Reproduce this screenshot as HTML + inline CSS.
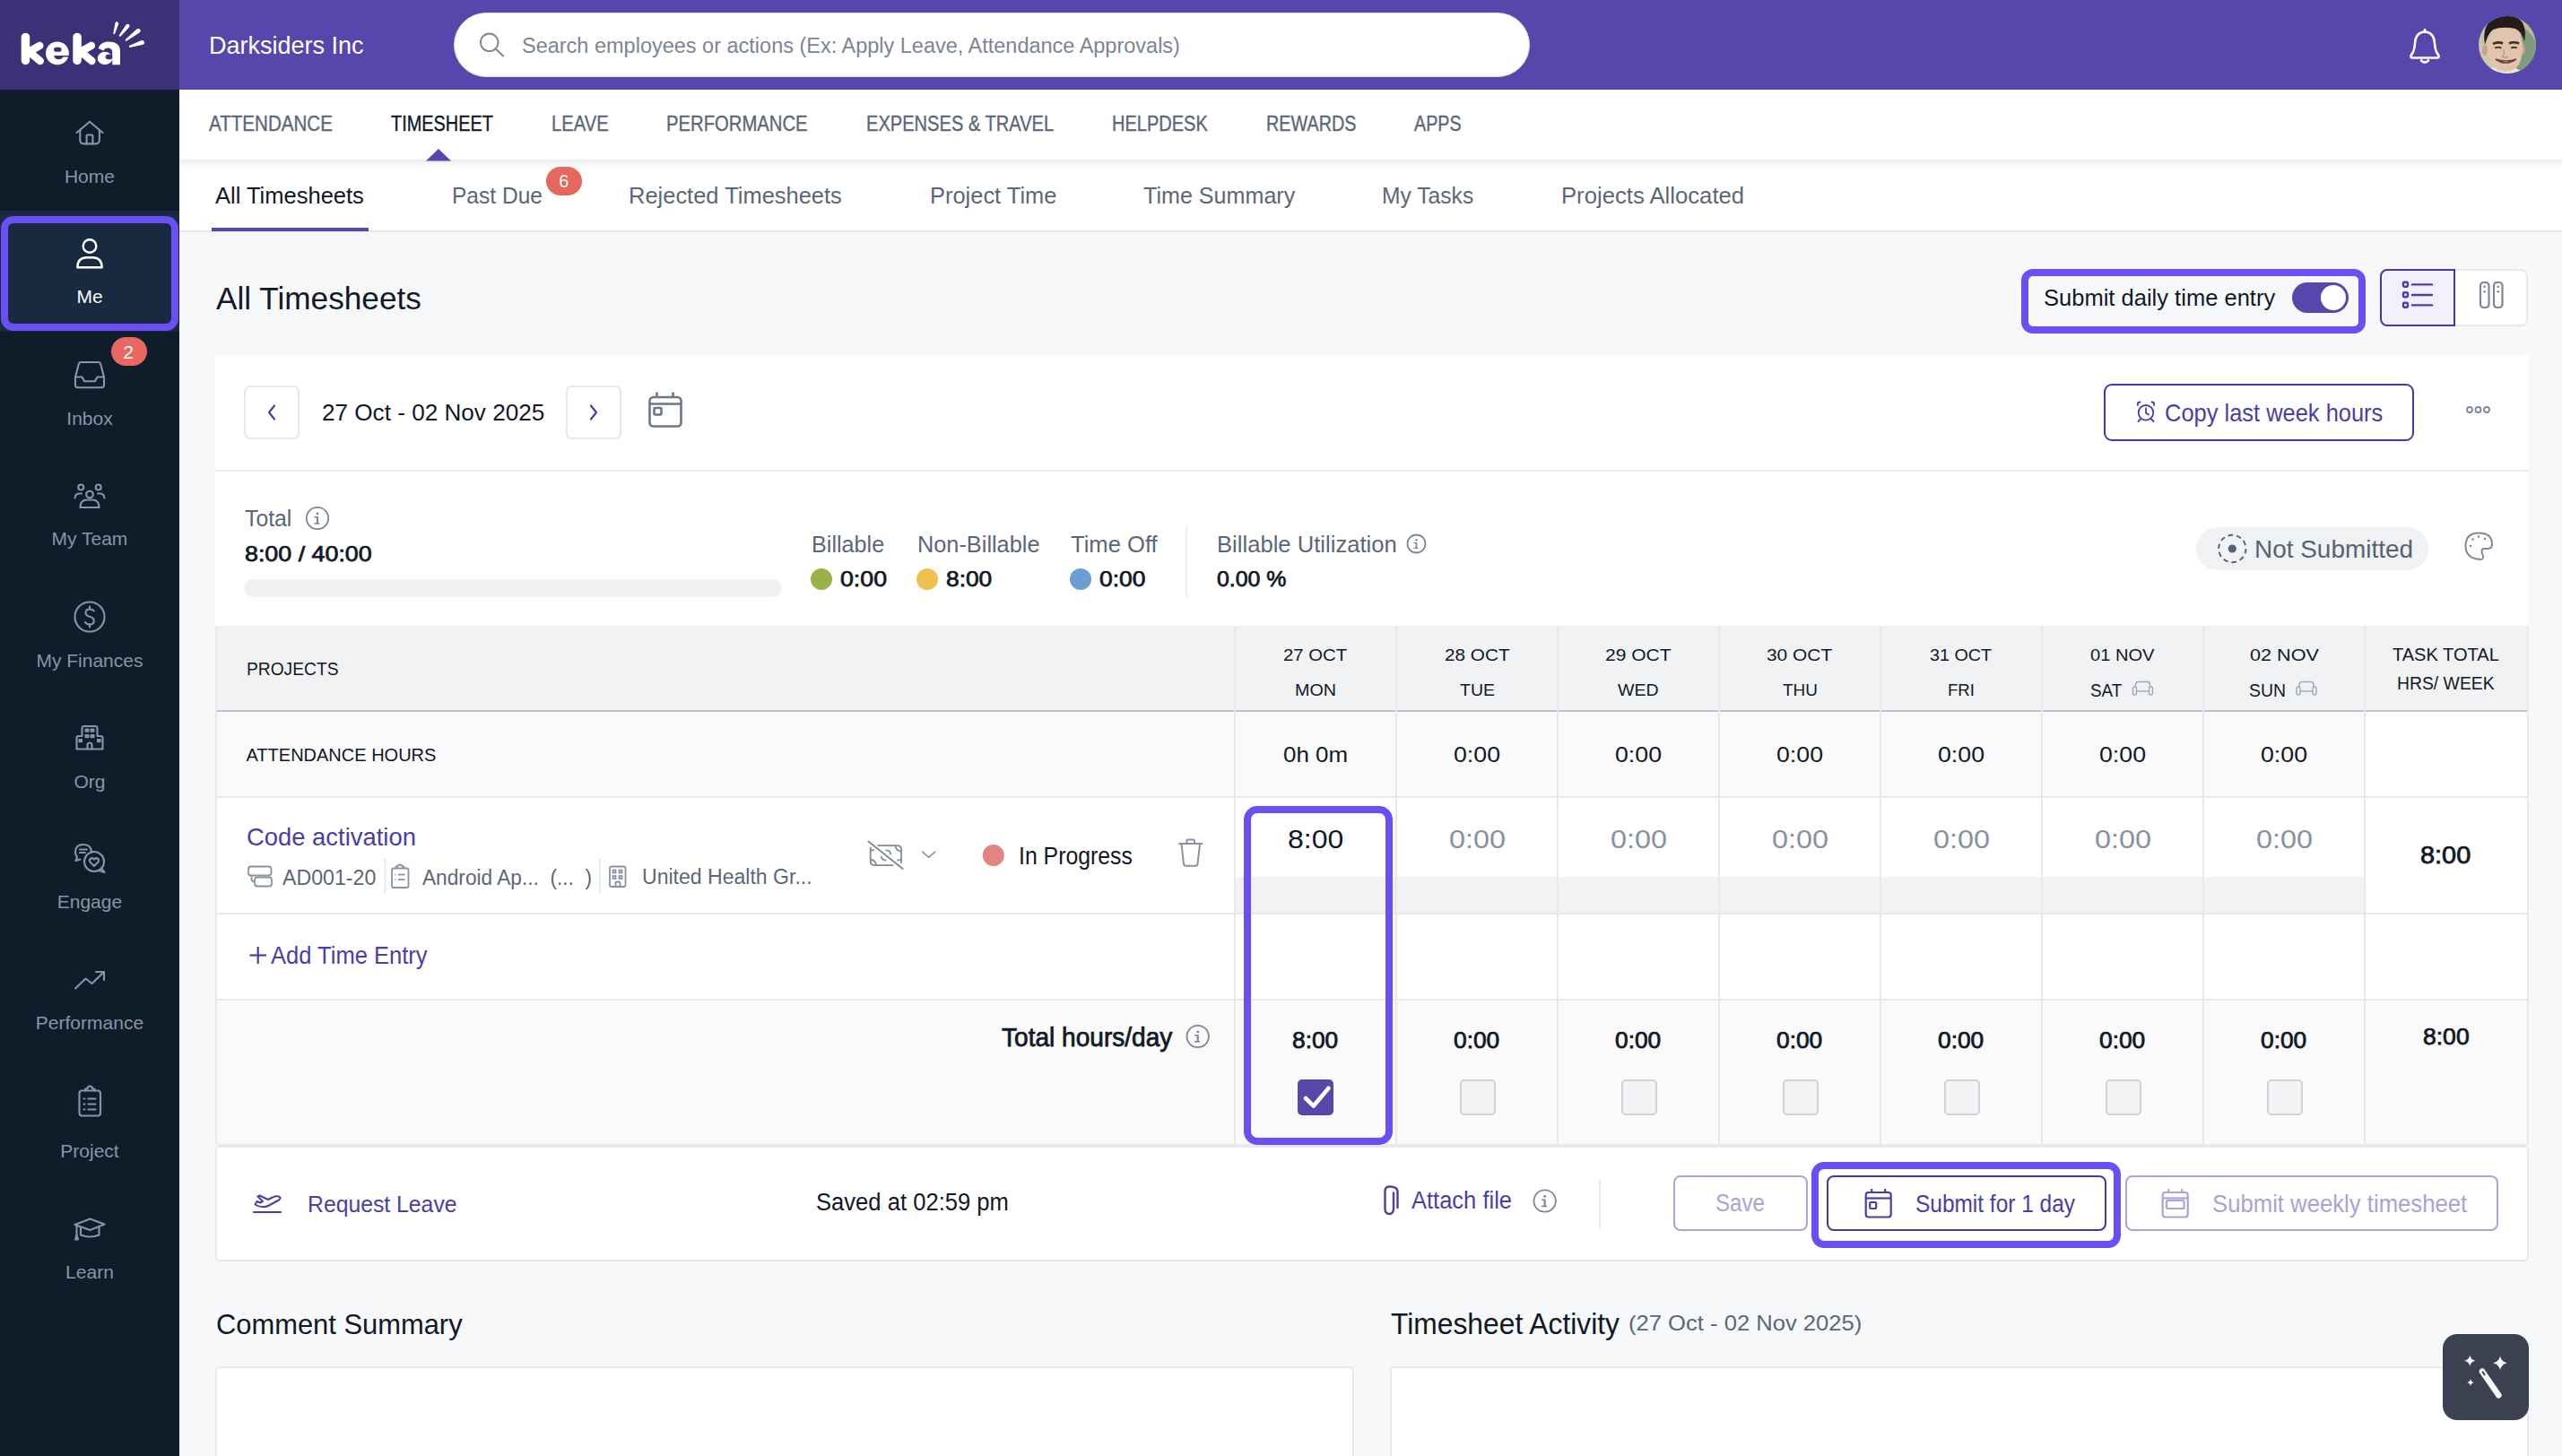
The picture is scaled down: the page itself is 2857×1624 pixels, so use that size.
<!DOCTYPE html>
<html><head><meta charset="utf-8"><title>Keka Timesheet</title>
<style>
html,body{margin:0;padding:0;width:2857px;height:1624px;overflow:hidden;background:#f7f8fa}
body{position:relative;font-family:"Liberation Sans",sans-serif}
.t{position:absolute;white-space:nowrap}
</style></head><body>
<div style="position:absolute;left:0px;top:0px;width:2857px;height:1624px;background:#f7f8fa"></div>
<div style="position:absolute;left:0px;top:0px;width:200px;height:1624px;background:#0f1d2a"></div>
<div style="position:absolute;left:0px;top:0px;width:200px;height:100px;background:#3c3176"></div>
<div style="position:absolute;left:0px;top:235px;width:200px;height:135px;background:#182a40"></div>
<div style="position:absolute;left:1px;top:241px;width:197.5px;height:128px;border:8px solid #6a4ff5;border-radius:14px;box-sizing:border-box"></div>
<div style="position:absolute;left:200px;top:0px;width:2657px;height:100px;background:#5547ab"></div>
<div style="position:absolute;left:200px;top:100px;width:2657px;height:78px;background:#fff"></div>
<div style="position:absolute;left:200px;top:178px;width:2657px;height:79px;background:linear-gradient(#e8e9ec 0px,#f1f2f3 3px,#fafafa 7px,#fff 11px)"></div>
<div style="position:absolute;left:200px;top:257px;width:2657px;height:2px;background:#e6e8ec"></div>
<div style="position:absolute;left:236px;top:254px;width:175px;height:4px;background:#5547ab"></div>
<div style="position:absolute;left:506px;top:14px;width:1200px;height:72px;background:#fff;border-radius:36px;border:1.5px solid #dcdee3;box-sizing:border-box"></div>
<div style="position:absolute;left:2254px;top:300px;width:384px;height:72px;border:8px solid #6a4ff5;border-radius:13px;box-sizing:border-box"></div>
<div style="position:absolute;left:2556px;top:315px;width:63px;height:34px;background:#5547ab;border-radius:17px"></div>
<div style="position:absolute;left:2588px;top:318px;width:28px;height:28px;background:#fff;border-radius:14px"></div>
<div style="position:absolute;left:2737px;top:300px;width:82px;height:64px;background:#fff;border:2px solid #e6e8ec;border-left:none;border-radius:0 8px 8px 0;box-sizing:border-box"></div>
<div style="position:absolute;left:2654px;top:300px;width:84px;height:64px;background:#f2f0fd;border:2.5px solid #4638a4;border-radius:8px 0 0 8px;box-sizing:border-box"></div>
<div style="position:absolute;left:240px;top:396px;width:2580px;height:302px;background:#fff"></div>
<div style="position:absolute;left:240px;top:524px;width:2580px;height:2px;background:#e9ebef"></div>
<div style="position:absolute;left:272px;top:430px;width:62px;height:60px;border:2px solid #e6e8ec;border-radius:7px;box-sizing:border-box;background:#fff"></div>
<div style="position:absolute;left:631px;top:430px;width:62px;height:60px;border:2px solid #e6e8ec;border-radius:7px;box-sizing:border-box;background:#fff"></div>
<div style="position:absolute;left:2346px;top:428px;width:346px;height:64px;border:2.5px solid #4638a4;border-radius:9px;box-sizing:border-box"></div>
<div style="position:absolute;left:272px;top:646px;width:600px;height:20px;background:#f0f1f4;border-radius:10px"></div>
<div style="position:absolute;left:1322px;top:586px;width:2px;height:80px;background:#eceef1"></div>
<div style="position:absolute;left:904px;top:634px;width:24px;height:24px;background:#9ab24a;border-radius:50%"></div>
<div style="position:absolute;left:1022px;top:634px;width:24px;height:24px;background:#f0c04e;border-radius:50%"></div>
<div style="position:absolute;left:1193px;top:634px;width:24px;height:24px;background:#6a9fd3;border-radius:50%"></div>
<div style="position:absolute;left:2449px;top:588px;width:259px;height:48px;background:#f1f2f4;border-radius:24px"></div>
<div style="position:absolute;left:240px;top:698px;width:2580px;height:94px;background:#f1f2f4"></div>
<div style="position:absolute;left:240px;top:793px;width:2580px;height:96px;background:#fafafa"></div>
<div style="position:absolute;left:2638px;top:793px;width:181px;height:96px;background:#fff"></div>
<div style="position:absolute;left:240px;top:792px;width:2580px;height:2px;background:#bcc3cd"></div>
<div style="position:absolute;left:240px;top:889px;width:2580px;height:227px;background:#fff"></div>
<div style="position:absolute;left:240px;top:888px;width:2580px;height:2px;background:#e8eaee"></div>
<div style="position:absolute;left:1377px;top:978px;width:1260px;height:41px;background:#f1f2f4"></div>
<div style="position:absolute;left:240px;top:1018px;width:2580px;height:2px;background:#e8eaee"></div>
<div style="position:absolute;left:240px;top:1114px;width:2580px;height:2px;background:#e8eaee"></div>
<div style="position:absolute;left:240px;top:1116px;width:2580px;height:161px;background:#fafafa"></div>
<div style="position:absolute;left:1376px;top:698px;width:2px;height:579px;background:#e6e8ec"></div>
<div style="position:absolute;left:1556px;top:698px;width:2px;height:579px;background:#e6e8ec"></div>
<div style="position:absolute;left:1736px;top:698px;width:2px;height:579px;background:#e6e8ec"></div>
<div style="position:absolute;left:1916px;top:698px;width:2px;height:579px;background:#e6e8ec"></div>
<div style="position:absolute;left:2096px;top:698px;width:2px;height:579px;background:#e6e8ec"></div>
<div style="position:absolute;left:2276px;top:698px;width:2px;height:579px;background:#e6e8ec"></div>
<div style="position:absolute;left:2456px;top:698px;width:2px;height:579px;background:#e6e8ec"></div>
<div style="position:absolute;left:2636px;top:698px;width:2px;height:579px;background:#e6e8ec"></div>
<div style="position:absolute;left:240px;top:698px;width:2580px;height:580px;border:2px solid #e8e9ec;border-top:none;border-radius:0 0 5px 5px;box-sizing:border-box"></div>
<div style="position:absolute;left:1447px;top:1204px;width:40px;height:40px;background:#5548a8;border-radius:5px"></div>
<div style="position:absolute;left:1628px;top:1204px;width:40px;height:40px;background:#f3f4f6;border:2px solid #cfd4db;border-radius:5px;box-sizing:border-box"></div>
<div style="position:absolute;left:1808px;top:1204px;width:40px;height:40px;background:#f3f4f6;border:2px solid #cfd4db;border-radius:5px;box-sizing:border-box"></div>
<div style="position:absolute;left:1988px;top:1204px;width:40px;height:40px;background:#f3f4f6;border:2px solid #cfd4db;border-radius:5px;box-sizing:border-box"></div>
<div style="position:absolute;left:2168px;top:1204px;width:40px;height:40px;background:#f3f4f6;border:2px solid #cfd4db;border-radius:5px;box-sizing:border-box"></div>
<div style="position:absolute;left:2348px;top:1204px;width:40px;height:40px;background:#f3f4f6;border:2px solid #cfd4db;border-radius:5px;box-sizing:border-box"></div>
<div style="position:absolute;left:2528px;top:1204px;width:40px;height:40px;background:#f3f4f6;border:2px solid #cfd4db;border-radius:5px;box-sizing:border-box"></div>
<div style="position:absolute;left:1387px;top:899px;width:166px;height:378px;border:8px solid #6a4ff5;border-radius:15px;box-sizing:border-box"></div>
<div style="position:absolute;left:240px;top:1278px;width:2580px;height:129px;background:#fff;border:2px solid #e8e9ec;border-radius:5px;box-sizing:border-box"></div>
<div style="position:absolute;left:1783px;top:1315px;width:2px;height:55px;background:#e6e8ec"></div>
<div style="position:absolute;left:1866px;top:1311px;width:150px;height:62px;border:2px solid #aaa4d8;border-radius:8px;box-sizing:border-box"></div>
<div style="position:absolute;left:2037px;top:1311px;width:312px;height:62px;border:2.5px solid #4638a4;border-radius:8px;box-sizing:border-box"></div>
<div style="position:absolute;left:2370px;top:1311px;width:416px;height:62px;border:2px solid #aaa4d8;border-radius:8px;box-sizing:border-box"></div>
<div style="position:absolute;left:2020px;top:1296px;width:345px;height:96px;border:8px solid #6a4ff5;border-radius:14px;box-sizing:border-box"></div>
<div style="position:absolute;left:240px;top:1524px;width:1270px;height:200px;background:#fff;border:2px solid #e8e9ec;border-radius:5px;box-sizing:border-box"></div>
<div style="position:absolute;left:1550px;top:1524px;width:1270px;height:200px;background:#fff;border:2px solid #e8e9ec;border-radius:5px;box-sizing:border-box"></div>
<div style="position:absolute;left:2724px;top:1488px;width:96px;height:96px;background:#3c4151;border-radius:16px"></div>
<div style="position:absolute;left:609px;top:186px;width:40px;height:32px;background:#e5675e;border-radius:16px"></div>
<div style="position:absolute;left:124px;top:376px;width:40px;height:32px;background:#e8675f;border-radius:16px"></div>
<div class="t" style="left:71.95px;top:185.52px;font-size:21.01px;line-height:21.01px;color:#8a94a6;">Home</div>
<div class="t" style="left:85.40px;top:320.22px;font-size:21.01px;line-height:21.01px;color:#fff;">Me</div>
<div class="t" style="left:74.32px;top:455.62px;font-size:21.01px;line-height:21.01px;color:#8a94a6;">Inbox</div>
<div class="t" style="left:57.56px;top:590.32px;font-size:21.01px;line-height:21.01px;color:#8a94a6;">My Team</div>
<div class="t" style="left:40.44px;top:725.52px;font-size:21.01px;line-height:21.01px;color:#8a94a6;">My Finances</div>
<div class="t" style="left:82.51px;top:860.72px;font-size:21.01px;line-height:21.01px;color:#8a94a6;">Org</div>
<div class="t" style="left:63.76px;top:995.42px;font-size:21.01px;line-height:21.01px;color:#8a94a6;">Engage</div>
<div class="t" style="left:39.86px;top:1130.32px;font-size:21.01px;line-height:21.01px;color:#8a94a6;">Performance</div>
<div class="t" style="left:67.33px;top:1273.22px;font-size:21.01px;line-height:21.01px;color:#8a94a6;">Project</div>
<div class="t" style="left:73.11px;top:1408.42px;font-size:21.01px;line-height:21.01px;color:#8a94a6;">Learn</div>
<div class="t" style="left:137.24px;top:382.21px;font-size:21.13px;line-height:21.13px;color:#fff;">2</div>
<div class="t" style="left:233.00px;top:36.60px;font-size:28.12px;line-height:28.12px;color:#fff;transform:scaleX(0.9600);transform-origin:0 0;">Darksiders Inc</div>
<div class="t" style="left:581.60px;top:39.16px;font-size:23.91px;line-height:23.91px;color:#7b8597;transform:scaleX(0.9827);transform-origin:0 0;">Search employees or actions (Ex: Apply Leave, Attendance Approvals)</div>
<div class="t" style="left:232.80px;top:126.70px;font-size:23.04px;line-height:23.04px;color:#5b6778;transform:scaleX(0.8933);transform-origin:0 0;-webkit-text-stroke:0.35px currentColor;">ATTENDANCE</div>
<div class="t" style="left:435.70px;top:126.70px;font-size:23.04px;line-height:23.04px;color:#111827;transform:scaleX(0.8643);transform-origin:0 0;-webkit-text-stroke:0.35px currentColor;">TIMESHEET</div>
<div class="t" style="left:614.70px;top:126.70px;font-size:23.04px;line-height:23.04px;color:#5b6778;transform:scaleX(0.8777);transform-origin:0 0;-webkit-text-stroke:0.35px currentColor;">LEAVE</div>
<div class="t" style="left:743.30px;top:126.70px;font-size:23.04px;line-height:23.04px;color:#5b6778;transform:scaleX(0.8798);transform-origin:0 0;-webkit-text-stroke:0.35px currentColor;">PERFORMANCE</div>
<div class="t" style="left:965.60px;top:126.70px;font-size:23.04px;line-height:23.04px;color:#5b6778;transform:scaleX(0.8722);transform-origin:0 0;-webkit-text-stroke:0.35px currentColor;">EXPENSES &amp; TRAVEL</div>
<div class="t" style="left:1239.70px;top:126.70px;font-size:23.04px;line-height:23.04px;color:#5b6778;transform:scaleX(0.8689);transform-origin:0 0;-webkit-text-stroke:0.35px currentColor;">HELPDESK</div>
<div class="t" style="left:1411.50px;top:126.70px;font-size:23.04px;line-height:23.04px;color:#5b6778;transform:scaleX(0.8595);transform-origin:0 0;-webkit-text-stroke:0.35px currentColor;">REWARDS</div>
<div class="t" style="left:1577.00px;top:126.70px;font-size:23.04px;line-height:23.04px;color:#5b6778;transform:scaleX(0.8567);transform-origin:0 0;-webkit-text-stroke:0.35px currentColor;">APPS</div>
<div class="t" style="left:240.00px;top:205.31px;font-size:26.09px;line-height:26.09px;color:#111827;transform:scaleX(0.9781);transform-origin:0 0;">All Timesheets</div>
<div class="t" style="left:503.50px;top:205.31px;font-size:26.09px;line-height:26.09px;color:#5b6778;transform:scaleX(0.9408);transform-origin:0 0;">Past Due</div>
<div class="t" style="left:701.00px;top:205.31px;font-size:26.09px;line-height:26.09px;color:#5b6778;transform:scaleX(0.9767);transform-origin:0 0;">Rejected Timesheets</div>
<div class="t" style="left:1036.50px;top:205.31px;font-size:26.09px;line-height:26.09px;color:#5b6778;transform:scaleX(0.9756);transform-origin:0 0;">Project Time</div>
<div class="t" style="left:1274.70px;top:205.31px;font-size:26.09px;line-height:26.09px;color:#5b6778;transform:scaleX(0.9628);transform-origin:0 0;">Time Summary</div>
<div class="t" style="left:1540.70px;top:205.31px;font-size:26.09px;line-height:26.09px;color:#5b6778;transform:scaleX(0.9448);transform-origin:0 0;">My Tasks</div>
<div class="t" style="left:1740.60px;top:205.31px;font-size:26.09px;line-height:26.09px;color:#5b6778;transform:scaleX(0.9845);transform-origin:0 0;">Projects Allocated</div>
<div class="t" style="left:623.33px;top:192.61px;font-size:19.72px;line-height:19.72px;color:#fff;">6</div>
<div class="t" style="left:240.50px;top:315.56px;font-size:34.78px;line-height:34.78px;color:#111827;transform:scaleX(1.0122);transform-origin:0 0;">All Timesheets</div>
<div class="t" style="left:2279.40px;top:318.91px;font-size:26.09px;line-height:26.09px;color:#111827;transform:scaleX(0.9788);transform-origin:0 0;">Submit daily time entry</div>
<div class="t" style="left:358.50px;top:447.25px;font-size:26.52px;line-height:26.52px;color:#111827;transform:scaleX(0.9850);transform-origin:0 0;">27 Oct - 02 Nov 2025</div>
<div class="t" style="left:2413.70px;top:446.93px;font-size:27.25px;line-height:27.25px;color:#4a3ea8;transform:scaleX(0.9339);transform-origin:0 0;">Copy last week hours</div>
<div class="t" style="left:273.00px;top:564.91px;font-size:26.09px;line-height:26.09px;color:#5b6778;transform:scaleX(0.9500);transform-origin:0 0;">Total</div>
<div class="t" style="left:273.40px;top:606.13px;font-size:24.65px;line-height:24.65px;color:#111827;-webkit-text-stroke:0.75px currentColor;transform:scaleX(1.0887);transform-origin:0 0;">8:00 / 40:00</div>
<div class="t" style="left:904.60px;top:593.51px;font-size:26.09px;line-height:26.09px;color:#5b6778;transform:scaleX(0.9651);transform-origin:0 0;">Billable</div>
<div class="t" style="left:1023.30px;top:593.51px;font-size:26.09px;line-height:26.09px;color:#5b6778;transform:scaleX(0.9707);transform-origin:0 0;">Non-Billable</div>
<div class="t" style="left:1193.50px;top:593.51px;font-size:26.09px;line-height:26.09px;color:#5b6778;transform:scaleX(0.9815);transform-origin:0 0;">Time Off</div>
<div class="t" style="left:1356.50px;top:593.51px;font-size:26.09px;line-height:26.09px;color:#5b6778;transform:scaleX(0.9823);transform-origin:0 0;">Billable Utilization</div>
<div class="t" style="left:937.20px;top:633.73px;font-size:24.65px;line-height:24.65px;color:#111827;-webkit-text-stroke:0.75px currentColor;transform:scaleX(1.0845);transform-origin:0 0;">0:00</div>
<div class="t" style="left:1055.40px;top:633.73px;font-size:24.65px;line-height:24.65px;color:#111827;-webkit-text-stroke:0.75px currentColor;transform:scaleX(1.0681);transform-origin:0 0;">8:00</div>
<div class="t" style="left:1226.00px;top:633.73px;font-size:24.65px;line-height:24.65px;color:#111827;-webkit-text-stroke:0.75px currentColor;transform:scaleX(1.0722);transform-origin:0 0;">0:00</div>
<div class="t" style="left:1356.87px;top:633.73px;font-size:24.65px;line-height:24.65px;color:#111827;-webkit-text-stroke:0.75px currentColor;transform:scaleX(1.0100);transform-origin:0 0;">0.00 %</div>
<div class="t" style="left:2514.00px;top:598.69px;font-size:27.54px;line-height:27.54px;color:#566275;transform:scaleX(1.0145);transform-origin:0 0;">Not Submitted</div>
<div class="t" style="left:274.50px;top:736.52px;font-size:19.71px;line-height:19.71px;color:#111827;transform:scaleX(0.9748);transform-origin:0 0;">PROJECTS</div>
<div class="t" style="left:1431.40px;top:720.68px;font-size:19.28px;line-height:19.28px;color:#111827;transform:scaleX(1.0551);transform-origin:0 0;">27 OCT</div>
<div class="t" style="left:1443.90px;top:760.38px;font-size:19.28px;line-height:19.28px;color:#111827;transform:scaleX(1.0262);transform-origin:0 0;">MON</div>
<div class="t" style="left:1610.70px;top:720.68px;font-size:19.28px;line-height:19.28px;color:#111827;transform:scaleX(1.0759);transform-origin:0 0;">28 OCT</div>
<div class="t" style="left:1627.50px;top:760.38px;font-size:19.28px;line-height:19.28px;color:#111827;transform:scaleX(1.0114);transform-origin:0 0;">TUE</div>
<div class="t" style="left:1790.15px;top:720.68px;font-size:19.28px;line-height:19.28px;color:#111827;transform:scaleX(1.0922);transform-origin:0 0;">29 OCT</div>
<div class="t" style="left:1804.10px;top:760.38px;font-size:19.28px;line-height:19.28px;color:#111827;transform:scaleX(1.0174);transform-origin:0 0;">WED</div>
<div class="t" style="left:1970.40px;top:720.68px;font-size:19.28px;line-height:19.28px;color:#111827;transform:scaleX(1.0848);transform-origin:0 0;">30 OCT</div>
<div class="t" style="left:1987.50px;top:760.38px;font-size:19.28px;line-height:19.28px;color:#111827;transform:scaleX(0.9843);transform-origin:0 0;">THU</div>
<div class="t" style="left:2152.40px;top:720.68px;font-size:19.28px;line-height:19.28px;color:#111827;transform:scaleX(1.0255);transform-origin:0 0;">31 OCT</div>
<div class="t" style="left:2172.00px;top:760.38px;font-size:19.28px;line-height:19.28px;color:#111827;transform:scaleX(0.9665);transform-origin:0 0;">FRI</div>
<div class="t" style="left:2331.25px;top:720.68px;font-size:19.28px;line-height:19.28px;color:#111827;transform:scaleX(1.0432);transform-origin:0 0;">01 NOV</div>
<div class="t" style="left:2330.60px;top:760.02px;font-size:20.29px;line-height:20.29px;color:#111827;transform:scaleX(0.9330);transform-origin:0 0;">SAT</div>
<div class="t" style="left:2508.50px;top:720.68px;font-size:19.28px;line-height:19.28px;color:#111827;transform:scaleX(1.1234);transform-origin:0 0;">02 NOV</div>
<div class="t" style="left:2508.00px;top:760.02px;font-size:20.29px;line-height:20.29px;color:#111827;transform:scaleX(0.9577);transform-origin:0 0;">SUN</div>
<div class="t" style="left:2667.80px;top:720.62px;font-size:19.71px;line-height:19.71px;color:#111827;transform:scaleX(1.0173);transform-origin:0 0;">TASK TOTAL</div>
<div class="t" style="left:2673.00px;top:752.62px;font-size:19.71px;line-height:19.71px;color:#111827;transform:scaleX(0.9822);transform-origin:0 0;">HRS/ WEEK</div>
<div class="t" style="left:274.50px;top:831.57px;font-size:20.0px;line-height:20.0px;color:#111827;">ATTENDANCE HOURS</div>
<div class="t" style="left:1430.90px;top:829.67px;font-size:24.37px;line-height:24.37px;color:#111827;transform:scaleX(1.0657);transform-origin:0 0;">0h 0m</div>
<div class="t" style="left:1435.85px;top:920.76px;font-size:29.58px;line-height:29.58px;color:#111827;transform:scaleX(1.0829);transform-origin:0 0;">8:00</div>
<div class="t" style="left:1441.39px;top:1148.28px;font-size:25.07px;line-height:25.07px;color:#111827;-webkit-text-stroke:0.75px currentColor;transform:scaleX(1.0505);transform-origin:0 0;">8:00</div>
<div class="t" style="left:1621.00px;top:829.67px;font-size:24.37px;line-height:24.37px;color:#111827;transform:scaleX(1.0971);transform-origin:0 0;">0:00</div>
<div class="t" style="left:1615.50px;top:920.76px;font-size:29.58px;line-height:29.58px;color:#8891a0;transform:scaleX(1.0950);transform-origin:0 0;">0:00</div>
<div class="t" style="left:1621.39px;top:1148.28px;font-size:25.07px;line-height:25.07px;color:#111827;-webkit-text-stroke:0.75px currentColor;transform:scaleX(1.0505);transform-origin:0 0;">0:00</div>
<div class="t" style="left:1801.00px;top:829.67px;font-size:24.37px;line-height:24.37px;color:#111827;transform:scaleX(1.0971);transform-origin:0 0;">0:00</div>
<div class="t" style="left:1795.50px;top:920.76px;font-size:29.58px;line-height:29.58px;color:#8891a0;transform:scaleX(1.0950);transform-origin:0 0;">0:00</div>
<div class="t" style="left:1801.39px;top:1148.28px;font-size:25.07px;line-height:25.07px;color:#111827;-webkit-text-stroke:0.75px currentColor;transform:scaleX(1.0505);transform-origin:0 0;">0:00</div>
<div class="t" style="left:1981.00px;top:829.67px;font-size:24.37px;line-height:24.37px;color:#111827;transform:scaleX(1.0971);transform-origin:0 0;">0:00</div>
<div class="t" style="left:1975.50px;top:920.76px;font-size:29.58px;line-height:29.58px;color:#8891a0;transform:scaleX(1.0950);transform-origin:0 0;">0:00</div>
<div class="t" style="left:1981.39px;top:1148.28px;font-size:25.07px;line-height:25.07px;color:#111827;-webkit-text-stroke:0.75px currentColor;transform:scaleX(1.0505);transform-origin:0 0;">0:00</div>
<div class="t" style="left:2161.00px;top:829.67px;font-size:24.37px;line-height:24.37px;color:#111827;transform:scaleX(1.0971);transform-origin:0 0;">0:00</div>
<div class="t" style="left:2155.50px;top:920.76px;font-size:29.58px;line-height:29.58px;color:#8891a0;transform:scaleX(1.0950);transform-origin:0 0;">0:00</div>
<div class="t" style="left:2161.39px;top:1148.28px;font-size:25.07px;line-height:25.07px;color:#111827;-webkit-text-stroke:0.75px currentColor;transform:scaleX(1.0505);transform-origin:0 0;">0:00</div>
<div class="t" style="left:2341.00px;top:829.67px;font-size:24.37px;line-height:24.37px;color:#111827;transform:scaleX(1.0971);transform-origin:0 0;">0:00</div>
<div class="t" style="left:2335.50px;top:920.76px;font-size:29.58px;line-height:29.58px;color:#8891a0;transform:scaleX(1.0950);transform-origin:0 0;">0:00</div>
<div class="t" style="left:2341.39px;top:1148.28px;font-size:25.07px;line-height:25.07px;color:#111827;-webkit-text-stroke:0.75px currentColor;transform:scaleX(1.0505);transform-origin:0 0;">0:00</div>
<div class="t" style="left:2521.00px;top:829.67px;font-size:24.37px;line-height:24.37px;color:#111827;transform:scaleX(1.0971);transform-origin:0 0;">0:00</div>
<div class="t" style="left:2515.50px;top:920.76px;font-size:29.58px;line-height:29.58px;color:#8891a0;transform:scaleX(1.0950);transform-origin:0 0;">0:00</div>
<div class="t" style="left:2521.39px;top:1148.28px;font-size:25.07px;line-height:25.07px;color:#111827;-webkit-text-stroke:0.75px currentColor;transform:scaleX(1.0505);transform-origin:0 0;">0:00</div>
<div class="t" style="left:2699.40px;top:941.35px;font-size:26.76px;line-height:26.76px;color:#111827;-webkit-text-stroke:0.75px currentColor;transform:scaleX(1.0798);transform-origin:0 0;">8:00</div>
<div class="t" style="left:2702.19px;top:1143.90px;font-size:24.93px;line-height:24.93px;color:#111827;-webkit-text-stroke:0.75px currentColor;transform:scaleX(1.0644);transform-origin:0 0;">8:00</div>
<div class="t" style="left:275.00px;top:920.78px;font-size:26.96px;line-height:26.96px;color:#4a3ea8;transform:scaleX(1.0167);transform-origin:0 0;">Code activation</div>
<div class="t" style="left:314.80px;top:967.28px;font-size:23.77px;line-height:23.77px;color:#5b6778;transform:scaleX(0.9749);transform-origin:0 0;">AD001-20</div>
<div class="t" style="left:470.70px;top:967.28px;font-size:23.77px;line-height:23.77px;color:#5b6778;transform:scaleX(0.9540);transform-origin:0 0;white-space:pre">Android Ap...  (...  )</div>
<div class="t" style="left:715.50px;top:967.21px;font-size:23.62px;line-height:23.62px;color:#5b6778;transform:scaleX(0.9765);transform-origin:0 0;">United Health Gr...</div>
<div class="t" style="left:1136.00px;top:941.06px;font-size:27.1px;line-height:27.1px;color:#111827;transform:scaleX(0.9162);transform-origin:0 0;">In Progress</div>
<div class="t" style="left:302.00px;top:1051.69px;font-size:27.54px;line-height:27.54px;color:#4a3ea8;transform:scaleX(0.9276);transform-origin:0 0;">Add Time Entry</div>
<div class="t" style="left:1117.16px;top:1142.66px;font-size:28.99px;line-height:28.99px;color:#111827;-webkit-text-stroke:0.75px currentColor;transform:scaleX(0.9681);transform-origin:0 0;">Total hours/day</div>
<div class="t" style="left:342.50px;top:1329.55px;font-size:26.52px;line-height:26.52px;color:#4a3ea8;transform:scaleX(0.9336);transform-origin:0 0;">Request Leave</div>
<div class="t" style="left:910.00px;top:1328.31px;font-size:26.81px;line-height:26.81px;color:#111827;transform:scaleX(0.9553);transform-origin:0 0;">Saved at 02:59 pm</div>
<div class="t" style="left:1574.00px;top:1326.31px;font-size:26.81px;line-height:26.81px;color:#4a3ea8;transform:scaleX(0.9516);transform-origin:0 0;">Attach file</div>
<div class="t" style="left:1913.00px;top:1329.31px;font-size:26.81px;line-height:26.81px;color:#a9a3d6;transform:scaleX(0.8998);transform-origin:0 0;">Save</div>
<div class="t" style="left:2135.80px;top:1328.69px;font-size:27.54px;line-height:27.54px;color:#4a3ea8;transform:scaleX(0.8878);transform-origin:0 0;">Submit for 1 day</div>
<div class="t" style="left:2467.00px;top:1328.69px;font-size:27.54px;line-height:27.54px;color:#a9a3d6;transform:scaleX(0.9334);transform-origin:0 0;">Submit weekly timesheet</div>
<div class="t" style="left:241.00px;top:1461.50px;font-size:31.3px;line-height:31.3px;color:#111827;transform:scaleX(0.9869);transform-origin:0 0;">Comment Summary</div>
<div class="t" style="left:1551.30px;top:1460.92px;font-size:32.46px;line-height:32.46px;color:#111827;transform:scaleX(0.9795);transform-origin:0 0;">Timesheet Activity</div>
<div class="t" style="left:1815.80px;top:1464.13px;font-size:24.65px;line-height:24.65px;color:#5b6778;transform:scaleX(1.0387);transform-origin:0 0;">(27 Oct - 02 Nov 2025)</div>
<svg style="position:absolute;left:0;top:0" width="2857" height="1624" viewBox="0 0 2857 1624">
<g fill="#fff" stroke="#fff" stroke-linecap="round">
<line x1="28.45" y1="41.4" x2="28.45" y2="67.5" stroke-width="9.5"/>
<line x1="31" y1="58.5" x2="44.3" y2="50.8" stroke-width="8.4"/>
<line x1="34" y1="59" x2="44.8" y2="68" stroke-width="8.4"/>
<line x1="86.05" y1="41.4" x2="86.05" y2="67.5" stroke-width="9.5"/>
<line x1="88.6" y1="58.5" x2="101.9" y2="50.8" stroke-width="8.4"/>
<line x1="91.6" y1="59" x2="102.4" y2="68" stroke-width="8.4"/>
</g>
<circle cx="63.9" cy="59.4" r="12.9" fill="#fff"/>
<rect x="60" y="52.8" width="8.6" height="5" rx="2.5" fill="#3c3176"/>
<path d="M60.2 62 H70.5 Q70 66.2 65.5 66.2 Q61 66.2 60.2 62Z" fill="#3c3176"/><rect x="69" y="62" width="9" height="1.5" fill="#3c3176"/>
<path d="M109.8 54 C111 48.5 116.5 46.5 121 46.5 C128.5 46.5 134 49.5 134 56.5 V72.2 H125.2 V58 C125.2 55.2 123.2 53.6 120.5 53.6 C118.2 53.6 116.6 54.6 115.4 56.4 Z" fill="#fff"/>
<ellipse cx="117" cy="65" rx="8.3" ry="7.2" fill="#fff"/>
<path d="M117.6 63.4 C117.6 61.2 119.6 60.4 121.8 60.4 C124 60.4 125.3 61.5 125.3 63.4 C125.3 65.3 124 66.3 121.8 66.3 C119.6 66.3 117.6 65.5 117.6 63.4Z" fill="#3c3176"/>
<g fill="#fff"><path d="M128.26 37.46 L132.13 26.70 A1.9 1.9 0 0 0 128.47 25.70 L126.34 36.94 A1.0 1.0 0 0 0 128.26 37.46Z"/><path d="M134.66 40.39 L144.12 30.27 A2.2 2.2 0 0 0 140.68 27.53 L132.94 39.01 A1.1 1.1 0 0 0 134.66 40.39Z"/><path d="M141.50 45.61 L155.80 36.24 A2.45 2.45 0 0 0 152.80 32.36 L140.10 43.79 A1.15 1.15 0 0 0 141.50 45.61Z"/><path d="M145.15 52.89 L159.23 49.69 A2.4 2.4 0 0 0 157.77 45.11 L144.45 50.71 A1.15 1.15 0 0 0 145.15 52.89Z"/></g>
<g fill="none" stroke="#8a94a6" stroke-width="2.1" stroke-linecap="round" stroke-linejoin="round">
<path d="M85.5 148 L100 135.8 L114.5 148"/><path d="M89.3 145.5 V156 Q89.3 160.4 93.7 160.4 H106.5 Q110.9 160.4 110.9 156 V145.5"/><path d="M96.6 160.4 V151.5 Q96.6 150.5 97.6 150.5 H102.4 Q103.4 150.5 103.4 151.5 V160.4"/>
</g>
<g fill="none" stroke="#fff" stroke-width="2.4" stroke-linecap="round" stroke-linejoin="round"><circle cx="100" cy="274.5" r="7.3"/><path d="M86.3 298.3 Q86.5 287.8 96 287.3 H104 Q113.5 287.8 113.7 298.3 Z"/></g>
<g fill="none" stroke="#8a94a6" stroke-width="2.1" stroke-linecap="round" stroke-linejoin="round">
<path d="M84 420.5 L88 405.5 Q88.5 404 90.5 404 H109.5 Q111.5 404 112 405.5 L116 420.5 V429.5 Q116 432.2 113.3 432.2 H86.7 Q84 432.2 84 429.5 Z"/><path d="M84 420.5 H91.5 L94 425.3 H106 L108.5 420.5 H116"/>
<circle cx="100" cy="551.5" r="3.8"/><circle cx="90.3" cy="543.5" r="3"/><circle cx="109.7" cy="543.5" r="3"/><path d="M89.5 566 Q89.5 557.5 97 557.5 H103 Q110.5 557.5 110.5 566 Z"/><path d="M83.5 555.5 Q84 550.5 89 550.5 H91"/><path d="M116.5 555.5 Q116 550.5 111 550.5 H109"/>
<circle cx="100" cy="688" r="16.5"/><path d="M104.8 681.5 Q103.5 679.5 100 679.5 Q95.5 679.5 95.5 683.5 Q95.5 686.5 100 687.8 Q104.8 689 104.8 692.5 Q104.8 696.5 100 696.5 Q96.3 696.5 95 694"/><line x1="100" y1="676.5" x2="100" y2="679.5"/><line x1="100" y1="696.5" x2="100" y2="699.5"/>
<path d="M85.5 835.5 V823 Q85.5 821 87.5 821 H91.5 V812 Q91.5 810 93.5 810 H106.5 Q108.5 810 108.5 812 V821 H112.5 Q114.5 821 114.5 823 V835.5 Z"/><rect x="95.5" y="813.5" width="3" height="2.2"/><rect x="101.5" y="813.5" width="3" height="2.2"/><rect x="88.5" y="825" width="2.6" height="2.2"/><rect x="109" y="825" width="2.6" height="2.2"/><rect x="95.5" y="820" width="3" height="2.2"/><rect x="101.5" y="820" width="3" height="2.2"/><path d="M97.5 835.5 V831 Q97.5 828.5 100 828.5 Q102.5 828.5 102.5 831 V835.5"/>
<path d="M102 951 Q102 942 93 942 Q84 942 84 950.5 Q84 954 86 956 L84.5 960 L89.5 958.5"/><line x1="89" y1="947.5" x2="97" y2="947.5"/><line x1="89" y1="951" x2="95" y2="951"/><circle cx="105" cy="961" r="11"/><path d="M113 968.5 L116.5 973 L110.5 971"/><path d="M105 966 L100.5 961.5 Q99 959 101.5 957.5 Q103.5 956.5 105 958.5 Q106.5 956.5 108.5 957.5 Q111 959 109.5 961.5 Z"/>
<path d="M84 1102.5 L95.5 1091.5 L102.5 1097 L116 1084"/><path d="M107 1084 H116 V1093"/>
<rect x="88.5" y="1216.5" width="23.5" height="28" rx="3"/><path d="M95 1216.5 V1214.5 H97.5 Q97.5 1211.5 100.2 1211.5 Q103 1211.5 103 1214.5 H105.5 V1216.5"/><line x1="93.5" y1="1225.5" x2="94.5" y2="1225.5"/><line x1="98.5" y1="1225.5" x2="106.5" y2="1225.5"/><line x1="93.5" y1="1231.5" x2="94.5" y2="1231.5"/><line x1="98.5" y1="1231.5" x2="106.5" y2="1231.5"/><line x1="93.5" y1="1237.5" x2="94.5" y2="1237.5"/><line x1="98.5" y1="1237.5" x2="106.5" y2="1237.5"/>
<path d="M83.5 1366 L100.5 1359.5 L116.5 1365.5 L100.5 1372 Z"/><path d="M90 1369 V1377.5 Q100.5 1381.5 110.5 1377.5 V1369"/><path d="M85.5 1367 V1378"/><path d="M84 1382.5 L85.5 1377.5 L87 1382.5 Z"/>
</g>
<g fill="none" stroke="#7b8597" stroke-width="1.9" stroke-linecap="round"><circle cx="545.7" cy="47.3" r="9.8"/><line x1="552.8" y1="54.5" x2="561.2" y2="62.5"/></g>
<g fill="none" stroke="#fff" stroke-width="2.6" stroke-linecap="round" stroke-linejoin="round"><path d="M2704 35.5 Q2714.5 36 2715 49 Q2715.5 55 2717 58 L2719.5 62 Q2720 64.5 2717.5 64.5 H2690.5 Q2688 64.5 2688.5 62 L2691 58 Q2692.5 55 2693 49 Q2693.5 36 2704 35.5Z"/><line x1="2704" y1="33" x2="2704" y2="35.5"/><path d="M2700 67.5 Q2704 71.5 2708 67.5"/></g>
<defs><clipPath id="av"><circle cx="2796" cy="50" r="32"/></clipPath><radialGradient id="avbg" cx="0.3" cy="0.6" r="0.8"><stop offset="0" stop-color="#d8cfb2"/><stop offset="1" stop-color="#b8b898"/></radialGradient></defs>
<g clip-path="url(#av)"><rect x="2764" y="18" width="64" height="64" fill="url(#avbg)"/><path d="M2812 30 Q2830 40 2830 60 L2830 85 L2805 85 Z" fill="#7f9c7c"/><path d="M2770 84 Q2775 74 2790 73 Q2805 73 2815 82 L2815 86 L2770 86Z" fill="#e9e6df"/><ellipse cx="2771" cy="56" rx="3" ry="6" fill="#c9a58e"/><ellipse cx="2813" cy="55" rx="3" ry="6" fill="#c9a58e"/><path d="M2775 52 Q2775 80 2795 80 Q2813 79 2813 52 Q2813 31 2795 30 Q2775 31 2775 52Z" fill="#e2c3ad"/><path d="M2771 50 Q2766 19 2795 17 Q2820 18 2815 46 Q2812 35 2805 32 Q2790 29 2780 33 Q2774 38 2771 50Z" fill="#231c1a"/><path d="M2780 49 Q2786 46 2791 48.5" stroke="#3a2c26" stroke-width="2.6" fill="none"/><path d="M2798 48.5 Q2803 46 2809 48.5" stroke="#3a2c26" stroke-width="2.6" fill="none"/><path d="M2782 53.5 Q2786 52 2789.5 53.5" stroke="#4a3a32" stroke-width="1.8" fill="none"/><path d="M2800 53.5 Q2803.5 52 2807 53.5" stroke="#4a3a32" stroke-width="1.8" fill="none"/><path d="M2792 55 Q2793 61 2790.5 63.5 Q2794 65 2797 63.5" stroke="#c09a85" stroke-width="1.5" fill="none"/><path d="M2783 66 Q2794 74 2806 66 Q2795 70 2783 66Z" fill="#f4f1ee" stroke="#6a4438" stroke-width="1.6"/></g>
<path d="M475 179.5 L489 166 L503 179.5 Z" fill="#5547ab"/>
<g fill="none" stroke="#4a3ea8" stroke-width="2.4" stroke-linecap="round"><rect x="2680" y="314.8" width="5" height="5" rx="1.2"/><rect x="2680" y="326.3" width="5" height="5" rx="1.2"/><rect x="2680" y="337.8" width="5" height="5" rx="1.2"/><line x1="2690" y1="317.4" x2="2712" y2="317.4"/><line x1="2690" y1="329" x2="2712" y2="329"/><line x1="2690" y1="340.4" x2="2712" y2="340.4"/></g>
<g fill="none" stroke="#7d8797" stroke-width="2.2"><rect x="2766" y="315" width="9.5" height="28" rx="3.5"/><rect x="2781" y="315" width="9.5" height="28" rx="3.5"/></g><g fill="#7d8797"><circle cx="2770.7" cy="319.7" r="1.3"/><circle cx="2770.7" cy="325.2" r="1.3"/><circle cx="2785.8" cy="319.7" r="1.3"/><circle cx="2785.8" cy="325.2" r="1.3"/></g>
<g fill="none" stroke="#4a3ea8" stroke-width="2.2" stroke-linecap="round" stroke-linejoin="round"><path d="M306 452.5 L300 460 L306 467.5"/><path d="M659 452.5 L665 460 L659 467.5"/></g>
<g fill="none" stroke="#6d778a" stroke-width="2.6" stroke-linejoin="round"><rect x="724.5" y="443" width="35" height="32.5" rx="4"/><line x1="724.5" y1="450.5" x2="759.5" y2="450.5"/><line x1="732.5" y1="437.5" x2="732.5" y2="443"/><line x1="750.5" y1="437.5" x2="750.5" y2="443"/><rect x="729.5" y="455" width="8" height="7.5" rx="1"/></g>
<g fill="none" stroke="#4a3ea8" stroke-width="1.8" stroke-linecap="round"><circle cx="2393" cy="460.3" r="8.3"/><path d="M2393 455.5 V460.5 L2396 462.5"/><path d="M2384 452 Q2383 448.5 2386.5 448.5"/><path d="M2402 452 Q2403 448.5 2399.5 448.5"/><line x1="2387" y1="467.5" x2="2384.5" y2="470"/><line x1="2399" y1="467.5" x2="2401.5" y2="470"/></g>
<g fill="none" stroke="#7d8797" stroke-width="1.8"><circle cx="2754" cy="457" r="3"/><circle cx="2763.5" cy="457" r="3"/><circle cx="2773" cy="457" r="3"/></g>
<g fill="none" stroke="#7d8797" stroke-width="1.8"><circle cx="354" cy="578" r="12.2"/></g><g fill="#7d8797"><circle cx="354" cy="572.876" r="1.464"/><rect x="352.902" y="576.17" width="2.1959999999999997" height="7.319999999999999"/><rect x="350.34" y="583.124" width="6.1" height="1.5859999999999999"/><rect x="350.34" y="576.048" width="3.6599999999999997" height="1.464"/></g>
<g fill="none" stroke="#7d8797" stroke-width="1.8"><circle cx="1579.5" cy="606.5" r="10"/></g><g fill="#7d8797"><circle cx="1579.5" cy="602.3" r="1.2"/><rect x="1578.6" y="605.0" width="1.7999999999999998" height="6.0"/><rect x="1576.5" y="610.7" width="5.0" height="1.3"/><rect x="1576.5" y="604.9" width="3.0" height="1.2"/></g>
<g fill="none" stroke="#7d8797" stroke-width="1.8"><circle cx="1335.7" cy="1156" r="12.2"/></g><g fill="#7d8797"><circle cx="1335.7" cy="1150.876" r="1.464"/><rect x="1334.602" y="1154.17" width="2.1959999999999997" height="7.319999999999999"/><rect x="1332.04" y="1161.124" width="6.1" height="1.5859999999999999"/><rect x="1332.04" y="1154.048" width="3.6599999999999997" height="1.464"/></g>
<g fill="none" stroke="#7d8797" stroke-width="1.8"><circle cx="1722.7" cy="1339.5" r="12.2"/></g><g fill="#7d8797"><circle cx="1722.7" cy="1334.376" r="1.464"/><rect x="1721.602" y="1337.67" width="2.1959999999999997" height="7.319999999999999"/><rect x="1719.04" y="1344.624" width="6.1" height="1.5859999999999999"/><rect x="1719.04" y="1337.548" width="3.6599999999999997" height="1.464"/></g>
<circle cx="2489.3" cy="612" r="15.2" fill="none" stroke="#566275" stroke-width="1.9" stroke-dasharray="5.5 4"/><circle cx="2489.3" cy="612" r="4.6" fill="#566275"/>
<g fill="none" stroke="#7d8797" stroke-width="1.9" stroke-linejoin="round"><path d="M2764 594.5 Q2779 594.5 2779 607 Q2779 612 2774 612 H2770 Q2767.5 612 2767.5 615 Q2768 618 2769 620 Q2770 624 2766 624 Q2749.5 623 2749.5 609 Q2749.5 594.5 2764 594.5Z"/></g><g fill="#7d8797"><circle cx="2755" cy="609" r="1.3"/><circle cx="2757.5" cy="601.5" r="1.3"/><circle cx="2764" cy="598.5" r="1.3"/><circle cx="2771" cy="601" r="1.3"/></g>
<g fill="none" stroke="#a0a8b5" stroke-width="1.4" stroke-linejoin="round"><path d="M2381.5 767 V763.5 Q2381.5 760.5 2384.5 760.5 H2394.5 Q2397.5 760.5 2397.5 763.5 V767"/><rect x="2378.5" y="766" width="4" height="9" rx="2"/><rect x="2396.5" y="766" width="4" height="9" rx="2"/><line x1="2382.5" y1="771" x2="2396.5" y2="771"/></g>
<g fill="none" stroke="#a0a8b5" stroke-width="1.4" stroke-linejoin="round"><path d="M2564 767 V763.5 Q2564 760.5 2567 760.5 H2577 Q2580 760.5 2580 763.5 V767"/><rect x="2561" y="766" width="4" height="9" rx="2"/><rect x="2579" y="766" width="4" height="9" rx="2"/><line x1="2565" y1="771" x2="2579" y2="771"/></g>
<g fill="none" stroke="#8a93a3" stroke-width="1.8" stroke-linejoin="round"><rect x="277" y="966.5" width="25.5" height="10" rx="3"/><rect x="284" y="978.5" width="19" height="10" rx="3"/><path d="M280.5 976.5 V980.5 Q280.5 983.5 284 983.5"/></g>
<g fill="none" stroke="#8a93a3" stroke-width="1.8" stroke-linejoin="round"><rect x="437" y="968.5" width="18.5" height="21.5" rx="2"/><path d="M441.5 968.5 V966.5 H443.5 Q443.5 964.5 446 964.5 Q448.5 964.5 448.5 966.5 H450.5 V968.5"/><line x1="440.5" y1="975.5" x2="441.5" y2="975.5"/><line x1="444" y1="975.5" x2="451.5" y2="975.5"/><line x1="440.5" y1="981" x2="441.5" y2="981"/><line x1="444" y1="981" x2="451.5" y2="981"/></g>
<g fill="none" stroke="#8a93a3" stroke-width="1.8"><rect x="680" y="966.5" width="17.5" height="22.5" rx="2"/><rect x="683.5" y="970.5" width="3" height="3"/><rect x="690.5" y="970.5" width="3" height="3"/><rect x="683.5" y="977" width="3" height="3"/><rect x="690.5" y="977" width="3" height="3"/><path d="M686.5 989 V985 Q686.5 983.5 689 983.5 Q691.5 983.5 691.5 985 V989"/></g>
<g fill="#e1e4e9"><rect x="428.5" y="958" width="1.6" height="39"/><rect x="668" y="958" width="1.6" height="39"/></g>
<g fill="none" stroke="#808a9a" stroke-width="1.75" stroke-linecap="round"><path d="M979 943 H1000.5 Q1005 943 1005 947.5 V962.3"/><path d="M970.7 945.5 V960.5 Q970.7 965 975.2 965 H995.5"/><path d="M998.5 943 A6.2 6.2 0 0 0 1005 949.3" /><path d="M970.7 958.7 A6.3 6.3 0 0 1 977 965"/><path d="M971.2 948.4 Q973.5 948.4 974.3 948"/><path d="M1001 959.3 Q1003 959.2 1004.6 959"/><path d="M988.2 948.4 A5.6 5.6 0 0 1 993.3 952.6"/><path d="M982.6 955.3 A5.6 5.6 0 0 0 987.6 959.6"/></g>
<line x1="968.4" y1="938.6" x2="1006.7" y2="969" stroke="#fff" stroke-width="5" stroke-linecap="round"/><line x1="968.4" y1="938.6" x2="1006.7" y2="969" stroke="#808a9a" stroke-width="1.9" stroke-linecap="round"/>
<path d="M1028.6 950.2 L1035.6 956.3 L1042.6 950.2" fill="none" stroke="#8a93a3" stroke-width="1.6" stroke-linecap="round" stroke-linejoin="round"/>
<circle cx="1107.8" cy="954" r="12" fill="#e08584"/>
<g fill="none" stroke="#8a93a3" stroke-width="2" stroke-linejoin="round" stroke-linecap="round"><line x1="1315" y1="941" x2="1340.5" y2="941"/><path d="M1323.5 941 V938 Q1323.5 936.5 1325 936.5 H1330.5 Q1332 936.5 1332 938 V941"/><path d="M1317.5 941.5 L1320 963.5 Q1320.3 965.8 1322.5 965.8 H1333 Q1335.2 965.8 1335.5 963.5 L1338 941.5"/></g>
<path d="M1456 1225 L1464.8 1233.6 L1481.5 1213.8" fill="none" stroke="#fff" stroke-width="4.6" stroke-linecap="round" stroke-linejoin="round"/>
<g stroke="#4a3ea8" stroke-width="2.2"><line x1="278.5" y1="1065.5" x2="297" y2="1065.5"/><line x1="287.7" y1="1056" x2="287.7" y2="1075"/></g>
<g fill="none" stroke="#4a3ea8" stroke-width="2" stroke-linecap="round" stroke-linejoin="round"><line x1="283" y1="1352" x2="313" y2="1352"/><path d="M284.5 1343.5 Q292 1348.5 300 1344.5 L311 1338.5 Q314 1336 311 1334.5 Q307.5 1333.5 304 1335.5 L299 1338 L289.5 1333.5 L287.5 1334.5 L293 1340 L290 1341.5 L286.5 1340 Z"/></g>
<path d="M1554 1330.5 V1348 Q1554 1354 1549.3 1354 Q1544.5 1354 1544.5 1348 V1329 Q1544.5 1323.5 1549.3 1323.5 Q1558.5 1323.5 1558.5 1329 V1347" fill="none" stroke="#4a3ea8" stroke-width="2.4" stroke-linecap="round"/>
<g fill="none" stroke="#4a3ea8" stroke-width="2.2" stroke-linejoin="round"><rect x="2080.7" y="1330" width="28" height="27.5" rx="3"/><line x1="2080.7" y1="1336.5" x2="2108.7" y2="1336.5"/><line x1="2087.2" y1="1326" x2="2087.2" y2="1330"/><line x1="2102.2" y1="1326" x2="2102.2" y2="1330"/><rect x="2085.2" y="1341" width="7" height="7" rx="1"/></g>
<g fill="none" stroke="#aaa4d8" stroke-width="2.2" stroke-linejoin="round"><rect x="2411.7" y="1330" width="28" height="27.5" rx="3"/><line x1="2418.2" y1="1326" x2="2418.2" y2="1330"/><line x1="2433.2" y1="1326" x2="2433.2" y2="1330"/><rect x="2416" y="1339" width="19.5" height="9" rx="1.5"/><line x1="2411.7" y1="1336.5" x2="2439.7" y2="1336.5"/></g>
<g fill="#f7f8fa"><path d="M2754.3 1511.6000000000001 Q2755.1960000000004 1516.846 2760.7000000000003 1517.7 Q2755.1960000000004 1518.554 2754.3 1523.8 Q2753.404 1518.554 2747.9 1517.7 Q2753.404 1516.846 2754.3 1511.6000000000001Z"/><path d="M2788 1512.7 Q2789.6 1518.78 2796 1520.3 Q2789.6 1521.82 2788 1527.8999999999999 Q2786.4 1521.82 2780 1520.3 Q2786.4 1518.78 2788 1512.7Z"/><path d="M2755 1538.1 Q2755.56 1541.454 2759 1542 Q2755.56 1542.546 2755 1545.9 Q2754.44 1542.546 2751 1542 Q2754.44 1541.454 2755 1538.1Z"/></g>
<line x1="2768" y1="1529.6" x2="2786.3" y2="1556.2" stroke="#f7f8fa" stroke-width="6.6" stroke-linecap="round"/><line x1="2768.6" y1="1530.4" x2="2770.6" y2="1533.3" stroke="#3c4151" stroke-width="2" stroke-linecap="round"/>
</svg>
</body></html>
